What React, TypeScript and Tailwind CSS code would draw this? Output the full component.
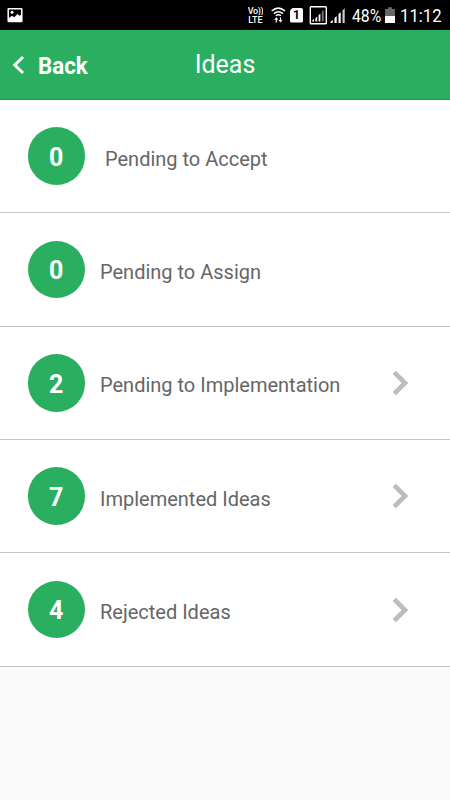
const rows = [
  { count: 0, label: 'Pending to Accept', wide: true, link: false },
  { count: 0, label: 'Pending to Assign', wide: false, link: false },
  { count: 2, label: 'Pending to Implementation', wide: false, link: true },
  { count: 7, label: 'Implemented Ideas', wide: false, link: true },
  { count: 4, label: 'Rejected Ideas', wide: false, link: true },
];

function StatusBar() {
  return (
    <div className="flex h-[30px] items-center bg-black text-white">
      <svg className="ml-[7px]" width="16" height="30" viewBox="0 0 16 30">
        <rect x="1.2" y="8.8" width="13.6" height="12.8" rx="0.5" fill="none" stroke="#fff" strokeWidth="1.5" />
        <circle cx="5" cy="12.3" r="1.5" fill="#fff" />
        <path d="M2 21v-3l3-2.3 2.2 1.6 3.3-3.2 2.1 1.6 2.4-1.5V21z" fill="#fff" />
      </svg>

      <div className="ml-auto flex items-center">
        <div className="flex w-[17px] flex-col items-center gap-px pt-px text-[9px] font-medium leading-[8px]">
          <span className="h-2 overflow-hidden tracking-[-0.4px]">Vo))</span>
          <span className="h-2 overflow-hidden">LTE</span>
        </div>
        <svg className="ml-[7px]" width="15" height="30" viewBox="0 0 15 30" fill="none" stroke="#fff">
          <path d="M0.7 11Q7.3 5.2 14 11M2.8 13.6Q7.3 9.8 12 13.6" strokeWidth="1.5" />
          <path d="M4.8 15.8Q7.3 13.8 10 15.8" strokeWidth="1.4" />
          <path d="M5.3 22.5v-4M9.5 17.5v4" strokeWidth="1.2" />
          <path d="M3.2 19.8l2.1-2.6 2.1 2.6zM7.4 19.9l2.1 2.6 2.1-2.6z" fill="#fff" stroke="none" />
        </svg>
        <div className="ml-1 flex h-[15px] w-[13px] items-center justify-center rounded-[2px] bg-white text-[12px] font-bold text-black [clip-path:polygon(3px_0,100%_0,100%_100%,0_100%,0_3px)]">
          1
        </div>
        <svg className="ml-[6px]" width="19" height="30" viewBox="0 0 19 30">
          <rect x="1.3" y="6.7" width="16" height="17" rx="0.8" fill="none" stroke="#fff" strokeWidth="1.4" />
          <path d="M3.2 21.5v-1l1.8-1.7v2.7zM6.4 21.5v-3.2l1.8-1.8v5zM9.6 21.5v-6.2l1.8-1.8v8z" fill="#fff" />
          <path d="M12.8 21.5v-9.7l1.9-2v11.7z" fill="#777" />
        </svg>
        <svg className="ml-[2px]" width="16" height="30" viewBox="0 0 16 30">
          <path d="M0.5 23v-1.2l2.2-2.1V23zM4.5 23v-5l2.2-2.1V23zM8.5 23v-8.8l2.2-2.1V23z" fill="#fff" />
          <path d="M12.5 23V10.5l2.2-2.2V23z" fill="#ccc" />
        </svg>
        <div className="ml-[6px] w-[30px] pt-px text-[19px] leading-[30px]">
          <span className="inline-block origin-left scale-x-[0.83]">48%</span>
        </div>
        <svg className="ml-[3px]" width="10" height="30" viewBox="0 0 10 30">
          <path d="M3 7.3h4v1.7h3v14H0V9h3z" fill="#666" />
          <path d="M0 16h10v7H0z" fill="#fff" />
        </svg>
        <div className="ml-[5px] mr-[8px] w-[42px] pt-px text-[19px] leading-[30px]">
          <span className="inline-block origin-left scale-x-[0.88]">11:12</span>
        </div>
      </div>
    </div>
  );
}

function Header() {
  return (
    <header className="grid h-[70px] grid-cols-3 items-center border-b border-[#1c9d4c] bg-[#2aaf61] text-white">
      <button className="flex h-[69px] items-center text-[23px] font-bold">
        <svg className="ml-3 mr-[13px]" width="13" height="20" viewBox="0 0 13 20" fill="none" stroke="#fff" strokeWidth="3">
          <path d="M11 2L2.8 10L11 18" />
        </svg>
        <span className="origin-left scale-x-[0.97] pt-[5px]">Back</span>
      </button>
      <h1 className="text-center text-[25px]">Ideas</h1>
    </header>
  );
}

export default function App() {
  return (
    <div className="flex h-[800px] w-[450px] flex-col overflow-hidden bg-[#fafafa] font-['Roboto',sans-serif]">
      <StatusBar />
      <Header />
      <main>
        {rows.map((r) => (
          <div key={r.label} className="flex h-[113.35px] items-center border-b border-[#c4c4c4] bg-white pl-[27.5px] pr-[41px]">
            <div className="flex size-[57.5px] items-center justify-center rounded-full bg-[#2aaf61] pt-[3px] text-[25px] font-bold text-white">
              {r.count}
            </div>
            <div className={`pt-[5px] text-[20px] text-[#666] ${r.wide ? 'ml-5' : 'ml-[15px]'}`}>{r.label}</div>
            {r.link && (
              <svg className="ml-auto" width="17" height="26" viewBox="0 0 17 26" fill="none" stroke="#bdbdbd" strokeWidth="4.7">
                <path d="M2.3 2.3L13 13L2.3 23.7" />
              </svg>
            )}
          </div>
        ))}
      </main>
    </div>
  );
}
